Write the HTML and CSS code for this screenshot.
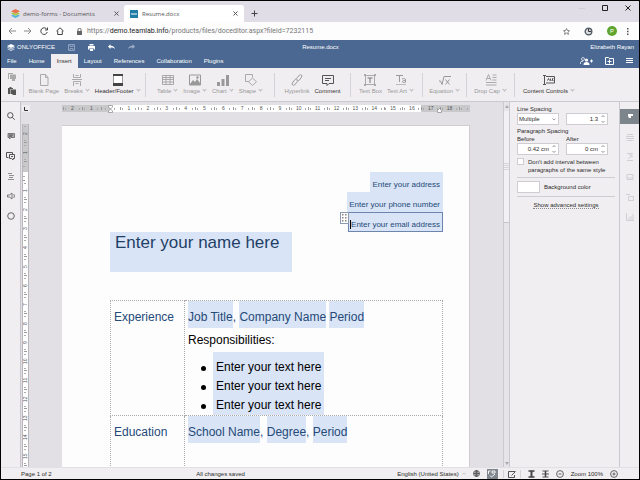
FILE: index.html
```html
<!DOCTYPE html>
<html lang="en">
<head>
<meta charset="utf-8">
<title>Resume.docx</title>
<link rel="stylesheet" href="styles.css">
</head>
<body>
<div class="window">
  <div class="tabstrip">
    <div class="tab">
      <svg class="fav" viewBox="0 0 9 9"><path d="M0 2.2 4.5 0 9 2.2 4.5 4.4z" fill="#e8734e"/><path d="M0 4.5 2 3.6l2.500 1.200L7 3.600l2 .9-4.500 2.200z" fill="#a5c33c"/><path d="M0 6.700l2-.9L4.500 7 7 5.800l2 .9L4.500 9z" fill="#50b6dc"/></svg>
      <span class="tab-name">demo-forms - Documents</span>
      <button class="plain" aria-label="Close tab"><svg width="5" height="5" viewBox="0 0 5 5"><path d="M.5.5l4 4M4.500.5l-4 4" stroke="#555"/></svg></button>
    </div>
    <div class="tab current">
      <svg class="fav small" viewBox="0 0 8 8"><path fill="#1f7ca6" d="M0 0h8v8H0z"/><path d="M1 4h6" stroke="#fff"/></svg>
      <span class="tab-name">Resume.docx</span>
      <button class="plain" aria-label="Close tab"><svg width="5" height="5" viewBox="0 0 5 5"><path d="M.5.5l4 4M4.500.5l-4 4" stroke="#555"/></svg></button>
    </div>
    <button class="plain newtab" aria-label="New tab"><svg width="7" height="7" viewBox="0 0 7 7"><path d="M3.500.5v6M.5 3.500h6" stroke="#444"/></svg></button>
    <div class="wincontrols">
      <button class="plain" aria-label="Minimize"><svg width="6" height="6" viewBox="0 0 6 6"><path d="M0 3.500h6" stroke="#d0cdd6"/></svg></button>
      <button class="plain" aria-label="Maximize"><svg width="6" height="6" viewBox="0 0 6 6"><path d="M.5.5h5v5h-5z" fill="none" stroke="#222"/></svg></button>
      <button class="plain" aria-label="Close"><svg width="6" height="6" viewBox="0 0 6 6"><path d="M.5.5l5 5M5.500.5l-5 5" stroke="#222"/></svg></button>
    </div>
  </div>

  <div class="addressbar">
    <button class="plain" aria-label="Back"><svg width="8" height="8" viewBox="0 0 8 8" fill="none" stroke="#888"><path d="M8 4H1M4 1 1 4l3 3"/></svg></button>
    <button class="plain" aria-label="Forward"><svg width="8" height="8" viewBox="0 0 8 8" fill="none" stroke="#888"><path d="M0 4h7M4 1l3 3-3 3"/></svg></button>
    <button class="plain" aria-label="Reload"><svg width="8" height="8" viewBox="0 0 8 8" fill="none" stroke="#444"><path d="M7 2.500A3.300 3.300 0 1 0 7.300 5M7.500.5v2.500H5"/></svg></button>
    <button class="plain" aria-label="Home page"><svg width="8" height="8" viewBox="0 0 8 8" fill="none" stroke="#444"><path d="M.5 4 4 .8 7.500 4M1.700 3.500v4h4.600v-4"/></svg></button>
    <svg class="lock" width="5" height="7" viewBox="0 0 5 7"><path d="M0 3h5v4H0z" fill="#666"/><path d="M1 3V1.500a1.500 1.200 0 0 1 3 0V3" fill="none" stroke="#666"/></svg>
    <div class="url">https://<b>demo.teamlab.info</b>/products/files/doceditor.aspx?fileid=7232115</div>
    <div class="browser-tools">
      <button class="plain" aria-label="Bookmark"><svg width="7" height="7" viewBox="0 0 7 7"><path d="M3.500.5l.9 2 2.100.2L5 4.200l.4 2.200-1.900-1.200-1.900 1.200L2 4.200.5 2.700l2.100-.2z" fill="none" stroke="#666" stroke-width=".8"/></svg></button>
      <button class="plain" aria-label="Extension"><svg width="9" height="9" viewBox="0 0 9 9"><circle cx="4.500" cy="4.500" r="3.300" fill="#ddd" stroke="#55606c" stroke-width="1.400"/><path d="M4.500 2v2.500H7" fill="none" stroke="#333"/></svg></button>
      <button class="avatar">P</button>
      <button class="plain" aria-label="Browser menu"><svg width="2" height="7" viewBox="0 0 2 7" fill="#555"><path d="M0 0h1.500v1.500H0zM0 2.700h1.500v1.500H0zM0 5.400h1.500v1.500H0z"/></svg></button>
    </div>
  </div>

  <header class="header">
    <div class="titlebar">
      <div class="brand">
        <svg width="8" height="7" viewBox="0 0 8 7" fill="#fff"><path d="M0 2l4-2 4 2-4 2z"/><path d="M0 3.500l1-.4 3 1.400 3-1.400 1 .4-4 1.900zM0 5.100l1-.4 3 1.300 3-1.300 1 .4L4 7z" opacity=".8"/></svg>
        <span>ONLYOFFICE</span>
      </div>
      <div class="quick">
        <button class="plain" aria-label="Save"><svg width="7" height="7" viewBox="0 0 7 7" fill="none" stroke="#8ba0c0"><path d="M.5.5h6v6h-6zM2 .5v2h3v-2M2 6.500v-2h3v2"/></svg></button>
        <button class="plain" aria-label="Print"><svg width="7" height="7" viewBox="0 0 7 7"><path d="M1.500 0h4v1.500h-4zM0 2h7v3.500H5.500V4h-4v1.500H0zM2 4.500h3V7H2z" fill="#fff"/></svg></button>
        <button class="plain" aria-label="Undo"><svg width="7" height="6" viewBox="0 0 7 6"><path d="M0 2.500 2.500.3v1.500C5 1.700 6.700 3 7 5 5.500 3.500 4 3.300 2.500 3.400v1.500z" fill="#fff"/></svg></button>
        <button class="plain" aria-label="Redo"><svg width="7" height="6" viewBox="0 0 7 6"><path d="M7 2.500 4.500.3v1.500C2 1.700.3 3 0 5c1.500-1.500 3-1.700 4.500-1.600v1.500z" fill="#9fb0cb"/></svg></button>
      </div>
      <div class="doctitle">Resume.docx</div>
      <div class="user">Elizabeth Rayan</div>
    </div>
    <div class="menurow">
      <nav class="menu">
        <button>File</button><button>Home</button><button class="on">Insert</button><button>Layout</button><button>References</button><button>Collaboration</button><button>Plugins</button>
      </nav>
      <div class="menu-tools">
        <button class="plain" aria-label="Share"><svg width="13" height="8" viewBox="0 0 13 8"><circle cx="3" cy="2" r="1.500" fill="none" stroke="#fff" stroke-width=".7"/><path d="M.4 7V6c0-1.200 1-1.800 2.600-1.800" fill="none" stroke="#fff" stroke-width=".8"/><circle cx="6.500" cy="3" r="1.600" fill="#fff"/><path d="M3.500 8c0-2.200 1-3 3-3s3 .8 3 3zM10 3.500h3v1h-3zM11 2.500h1v3h-1z" fill="#fff"/></svg></button>
        <button class="plain" aria-label="Open location"><svg width="9" height="8" viewBox="0 0 9 8" fill="none" stroke="#fff"><path d="M.5 7.500v-7h3l.8 1h4.200v6zM2.500 4.500h4M4.500 2.500v4"/></svg></button>
        <button class="plain" aria-label="View settings"><svg width="7" height="6" viewBox="0 0 7 6"><path d="M0 .5h7M0 2.500h7M0 4.500h7" stroke="#fff"/></svg></button>
      </div>
    </div>
  </header>

  <div class="toolbar">
    <div class="clip">
      <button class="plain" aria-label="Copy"><svg width="8" height="8" viewBox="0 0 8 8" fill="#aaa"><path d="M0 0h5v1H1v5H0zM2 1.500h6V6H7v2H4V6H2z"/></svg></button>
      <button class="plain" aria-label="Paste"><svg width="8" height="8" viewBox="0 0 8 8" fill="#555"><path d="M0 1h1.500V0h2v1H5v1H2.500v5H0zM3 2.500h5V8H4.500V7H3z"/></svg></button>
    </div>
    <div class="group">
      <button class="tool"><svg viewBox="0 0 12 12"><path d="M2.500.5h5l2.500 3v8H2.500zM7.500.5v3H10" fill="none" stroke="#aaa"/></svg><span>Blank Page</span></button>
      <button class="tool drop"><svg viewBox="0 0 12 12"><path d="M2.500 0v3.500h7V0M1 5.500h10M2.500 12V7.500h7V12M4.500 1.500h3M4.500 9.500h3" fill="none" stroke="#aaa"/></svg><span>Breaks</span></button>
      <button class="tool drop dark"><svg viewBox="0 0 12 12"><path d="M1.500.5h9v11h-9z" fill="#fff" stroke="#999"/><path d="M1 0h10v2H1zM1 9h10v3H1z" fill="#444"/></svg><span>Header/Footer</span></button>
    </div>
    <div class="group">
      <button class="tool drop"><svg viewBox="0 0 12 12"><path d="M.5 1.500h11v9H.5zM.5 3.500h11M.5 5.500h11M.5 8h11M4 1.500v9M8 1.500v9" fill="none" stroke="#999" stroke-width=".8"/></svg><span>Table</span></button>
      <button class="tool drop"><svg viewBox="0 0 12 12"><path d="M.5 1h11v10H.5z" fill="none" stroke="#999"/><path d="M1 10l3-4 2 2 2-3 3 4v2H1z" fill="#999"/><circle cx="8.500" cy="3.500" r="1.200" fill="#999"/></svg><span>Image</span></button>
      <button class="tool drop"><svg viewBox="0 0 12 12"><path d="M0 8h3v4H0zM4.500 5h3v7h-3zM9 1h3v11H9z" fill="#999"/></svg><span>Chart</span></button>
      <button class="tool drop"><svg viewBox="0 0 12 12" fill="none" stroke="#aaa"><path d="M4 7.500H.5v-7h7v3"/><path d="M7.500 4l4 3.700-4 3.800-4-3.800z"/></svg><span>Shape</span></button>
    </div>
    <div class="group">
      <button class="tool"><svg viewBox="0 0 12 12" fill="none" stroke="#999"><path d="M5.500 4.500l3-3.500c1.500-1 3 .5 2.200 2L8 6.500c-1 .8-2 .5-2.500-.5M6.500 7.500l-3 3.500c-1.500 1-3-.5-2.200-2L4 5.500c1-.8 2-.5 2.500.5"/></svg><span>Hyperlink</span></button>
      <button class="tool dark"><svg viewBox="0 0 12 12" fill="none" stroke="#555"><path d="M.5 1.500h11v8H7l-2 2v-2H.5zM3 4.500h6M3 6.500h4"/></svg><span>Comment</span></button>
    </div>
    <div class="group">
      <button class="tool"><svg viewBox="0 0 12 12"><path d="M1.500 1.500h9v9h-9z" fill="none" stroke="#aaa"/><path d="M3.500 4h5M6 4v5" stroke="#777"/><path d="M0 0h2v2H0zM10 0h2v2h-2zM0 10h2v2H0zM10 10h2v2h-2z" fill="#aaa"/></svg><span>Text Box</span></button>
      <button class="tool drop"><svg viewBox="0 0 12 12"><path d="M1 1.500h7M4.500 1.500V8M7 5c2-.8 3.500-.5 3.500 1v2.500M10.500 6.500C8.500 6.300 7.500 6.800 7.500 7.600c0 1.200 2 1.100 3 0" fill="none" stroke="#999"/><path d="M1 10.500h10" stroke="#bbb"/></svg><span>Text Art</span></button>
    </div>
    <div class="group">
      <button class="tool drop"><svg viewBox="0 0 12 12" fill="none" stroke="#999"><path d="M0 7h1.500L3 10.500l2-8h7"/><path d="M6.500 5.500l4 5M10.500 5.500l-4 5"/></svg><span>Equation</span></button>
    </div>
    <div class="group">
      <button class="tool drop"><svg viewBox="0 0 12 12" fill="none" stroke="#aaa"><path d="M1 6.500l2.500-6 2.500 6M2 4.500h3M7.500 1h4M7.500 3.500h4M7.500 6h4M1 8.500h10.500M1 11h10.500"/></svg><span>Drop Cap</span></button>
    </div>
    <div class="group last">
      <button class="tool drop dark"><svg viewBox="0 0 12 12" fill="none" stroke="#555"><path d="M0 1.500h3M1.500 1.500v9M0 10.500h3M3 2.500h8.500v6.500H3M4.500 6.500l1-2 1 2M7.500 4.500v2h1M10.500 4.500h-1v2h1"/></svg><span>Content Controls</span></button>
    </div>
  </div>

  <main class="work">
    <aside class="leftrail">
      <button class="plain" aria-label="Search"><svg width="8" height="8" viewBox="0 0 8 8" fill="none" stroke="#555"><circle cx="3.300" cy="3.300" r="2.700"/><path d="M5.300 5.300l2.400 2.400"/></svg></button>
      <button class="plain" aria-label="Comments"><svg width="8" height="8" viewBox="0 0 8 8"><path d="M1 1.500h6.500v4H4L2.500 7V5.500H1z" fill="#aaa" stroke="#666" stroke-width=".8"/><path d="M2 3h4M2 4.200h3" stroke="#444" stroke-width=".8"/></svg></button>
      <button class="plain" aria-label="Chat"><svg width="9" height="8" viewBox="0 0 9 8" fill="none" stroke="#555"><path d="M2.500 5.500H.5v-5h6v2M3.500 2.500h5v4H7V8L5.500 6.500h-2zM5 4.500h2"/></svg></button>
      <button class="plain" aria-label="Navigation"><svg width="8" height="8" viewBox="0 0 8 8"><path d="M1 1.500h4M2 3.500h5M2 5.500h4M1 7.500h6" stroke="#777" stroke-width=".8"/></svg></button>
      <button class="plain" aria-label="Feedback"><svg width="8" height="8" viewBox="0 0 8 8" fill="none" stroke="#777"><path d="M.5 3h2L5 1v6L2.500 5h-2zM6.500 2c1.200 1 1.200 3 0 4"/></svg></button>
      <button class="plain" aria-label="About"><svg width="8" height="8" viewBox="0 0 8 8"><circle cx="4" cy="4" r="3.300" fill="none" stroke="#666"/></svg></button>
    </aside>

    <section class="canvas">
      <div class="hrow">
        <div class="corner"><svg width="4" height="4" viewBox="0 0 4 4"><path d="M.5 0v3.500H4" fill="none" stroke="#333"/></svg></div>
        <div class="hruler">
          <i>2</i><i>1</i><i class="mark"></i><i>1</i><i>2</i><i>3</i><i>4</i><i>5</i><i>6</i><i>7</i><i>8</i><i>9</i><i>10</i><i>11</i><i>12</i><i>13</i><i>14</i><i>15</i><i>16</i><i>17</i><i>18</i><i class="tail"></i>
          <svg class="indent start" width="5" height="8" viewBox="0 0 5 8"><path d="M.5.5h4v1.500L2.500 4 .5 2zM2.500 4l2 2v1.500h-4V6z" fill="#fff" stroke="#888" stroke-width=".7"/></svg>
          <svg class="indent end" width="5" height="5" viewBox="0 0 5 5"><path d="M2.500.5l2 2v2h-4v-2z" fill="#fff" stroke="#888" stroke-width=".7"/></svg>
        </div>
      </div>
      <div class="vrow">
        <div class="vruler">
          <i>2</i><i>1</i><i></i><i>1</i><i>2</i><i>3</i><i>4</i><i>5</i><i>6</i><i>7</i><i>8</i><i>9</i><i>10</i><i>11</i><i>12</i><i>13</i><i>14</i><i>15</i>
        </div>
        <article class="page">
          <div class="contacts">
            <p class="field">Enter your address</p>
            <p class="field">Enter your phone number</p>
            <p class="field active">Enter your email address<span class="handle"><svg width="5" height="8" viewBox="0 0 5 8" fill="#888"><path d="M0 0h1.500v1.500H0zM3 0h1.500v1.500H3zM0 3h1.500v1.500H0zM3 3h1.500v1.500H3zM0 6h1.500v1.500H0zM3 6h1.500v1.500H3z"/></svg></span></p>
          </div>
          <h1>Enter your name here</h1>
          <table>
            <tr>
              <th scope="row">Experience</th>
              <td>
                <p class="headline"><span>Job Title</span>, <span>Company Name</span> <span>Period</span></p>
                <p class="resp">Responsibilities:</p>
                <ul><li>Enter your text here</li><li>Enter your text here</li><li>Enter your text here</li></ul>
              </td>
            </tr>
            <tr class="rest">
              <th scope="row">Education</th>
              <td><p class="headline"><span>School Name</span>, <span>Degree</span>, <span>Period</span></p></td>
            </tr>
          </table>
        </article>
      </div>
    </section>

    <div class="scroll">
      <button class="plain" aria-label="Scroll up"><svg width="4" height="3" viewBox="0 0 4 3"><path d="M0 3l2-3 2 3z" fill="#aaa"/></svg></button>
      <div class="track"><div class="thumb"></div></div>
      <button class="plain" aria-label="Scroll down"><svg width="4" height="3" viewBox="0 0 4 3"><path d="M0 0l2 3 2-3z" fill="#aaa"/></svg></button>
    </div>

    <aside class="panel">
      <div class="pair">
        <label class="cap" for="ls">Line Spacing</label><span></span>
        <div class="box"><select id="ls"><option>Multiple</option></select><svg class="chev" width="4" height="3" viewBox="0 0 4 3"><path d="M.5.5 2 2 3.500.5" fill="none" stroke="#888" stroke-width=".8"/></svg></div>
        <div class="box"><input type="text" value="1.3" aria-label="Line spacing value"><svg class="spin" width="4" height="8" viewBox="0 0 4 8"><path d="M.5 2 2 .5 3.500 2M.5 6 2 7.500 3.500 6" fill="none" stroke="#777" stroke-width=".8"/></svg></div>
      </div>
      <div class="pair second">
        <span class="cap wide">Paragraph Spacing</span>
        <label for="before">Before</label><label for="after">After</label>
        <div class="box"><input id="before" type="text" value="0.42 cm"><svg class="spin" width="4" height="8" viewBox="0 0 4 8"><path d="M.5 2 2 .5 3.500 2M.5 6 2 7.500 3.500 6" fill="none" stroke="#777" stroke-width=".8"/></svg></div>
        <div class="box"><input id="after" type="text" value="0 cm"><svg class="spin" width="4" height="8" viewBox="0 0 4 8"><path d="M.5 2 2 .5 3.500 2M.5 6 2 7.500 3.500 6" fill="none" stroke="#777" stroke-width=".8"/></svg></div>
      </div>
      <label class="check"><input type="checkbox"><span>Don't add interval between<br>paragraphs of the same style</span></label>
      <div class="bgcolor"><button class="swatch" id="bg" aria-label="Background color"></button><label for="bg">Background color</label></div>
      <div class="adv"><a href="#">Show advanced settings</a></div>
    </aside>

    <aside class="rightrail">
      <button class="sel" aria-label="Paragraph settings"><svg width="8" height="8" viewBox="0 0 8 8"><path d="M2 1h5v2H5v2H3.500C2 4.500 2 3 2 1z" fill="#fff"/></svg></button>
      <button aria-label="Table settings"><svg width="8" height="8" viewBox="0 0 8 8"><path d="M1 1.500h6M0 3.500h8M0 5.500h8M1 7.500h6" stroke="#d0cfd4"/></svg></button>
      <button aria-label="Image settings"><svg width="8" height="8" viewBox="0 0 8 8"><path d="M1 .5h6M1 7.500h6M2 6l4-4M3 2h3v3" fill="none" stroke="#d0cfd4"/></svg></button>
      <button aria-label="Header settings"><svg width="8" height="8" viewBox="0 0 8 8"><path d="M1 1.500h6v5H1zM1 5h6" fill="none" stroke="#d0cfd4"/></svg></button>
      <button aria-label="Shape settings"><svg width="8" height="8" viewBox="0 0 8 8" fill="none" stroke="#d0cfd4"><path d="M0 1.500h4M2.500 3.500h5v4h-5z"/></svg></button>
      <button aria-label="Chart settings"><svg width="8" height="8" viewBox="0 0 8 8"><path d="M.5 0v7.500H8M3 7V4M5 7V3M7 7V1" fill="none" stroke="#d0cfd4"/></svg></button>
    </aside>
  </main>

  <footer class="status">
    <span class="pages">Page 1 of 2</span>
    <span class="saved">All changes saved</span>
    <div class="status-tools">
      <button class="lang">English (United States)<svg width="4" height="3" viewBox="0 0 4 3"><path d="M.5 2.500 2 1l1.500 1.500" fill="none" stroke="#bbb" stroke-width=".8"/></svg></button>
      <button class="plain" aria-label="Document language"><svg width="7" height="7" viewBox="0 0 7 7" fill="none" stroke="#555" stroke-width=".9"><circle cx="3.500" cy="3.500" r="3"/><path d="M.5 3.500h6M3.500.5v6"/><ellipse cx="3.500" cy="3.500" rx="1.500" ry="3"/></svg></button>
      <button class="spell" aria-label="Spell checking"><svg width="8" height="8" viewBox="0 0 8 8" fill="none" stroke="#fff"><path d="M.5 1v3M.5 1h2M4 1h3v2H4zM2 5.500l1.500 1.500L7 4" stroke-width=".9"/></svg></button>
      <button class="plain edged" aria-label="Track changes"><svg width="8" height="8" viewBox="0 0 8 8" fill="none" stroke="#555"><path d="M7 1.500H.5v6h6V5M3.500 5.500l4-4"/></svg></button>
      <button class="plain" aria-label="Fit page"><svg width="7" height="8" viewBox="0 0 7 8"><path d="M.5 1h6M.5 7h6" stroke="#444" stroke-width="1.500"/><path d="M3.500 1v6" stroke="#444" stroke-width="2"/></svg></button>
      <button class="plain" aria-label="Fit width"><svg width="7" height="8" viewBox="0 0 7 8"><path d="M.5 1h6M.5 7h6M0 4h7" stroke="#555" stroke-width="1.200"/><path d="M3.500 1v6" stroke="#444" stroke-width="1.500"/></svg></button>
      <button class="plain" aria-label="Zoom out"><svg width="8" height="8" viewBox="0 0 8 8" fill="none" stroke="#555" stroke-width=".9"><circle cx="4" cy="4" r="3.400"/><path d="M2.500 4h3"/></svg></button>
      <span class="zoomval">Zoom 100%</span>
      <button class="plain" aria-label="Zoom in"><svg width="8" height="8" viewBox="0 0 8 8" fill="none" stroke="#555" stroke-width=".9"><circle cx="4" cy="4" r="3.400"/><path d="M2.500 4h3M4 2.500v3"/></svg></button>
    </div>
  </footer>
</div>
</body>
</html>
```
FILE: styles.css
```css
* { box-sizing: border-box; }
body, p, h1, ul { margin: 0; padding: 0; }
body {
  font: 6px/8px "Liberation Sans", Arial, sans-serif;
  color: #2c2c2c;
  background: #f0eef1;
}
button, input, select {
  font: inherit;
  color: inherit;
  border: 0;
  padding: 0;
  margin: 0;
  background: none;
}
svg { display: block; flex: none; }
.plain { display: flex; align-items: center; justify-content: center; }

.window {
  height: 100vh;
  display: flex;
  flex-direction: column;
  border: 1px solid #000;
  overflow: hidden;
}

/* browser tabs */
.tabstrip {
  flex: none;
  display: flex;
  height: 21px;
  padding-top: 4px;
  background: #e0dde7;
}
.tab {
  width: 123px;
  display: flex;
  align-items: center;
  gap: 3px;
  padding: 0 5px 0 10px;
  color: #555;
}
.tab.current {
  width: 120px;
  padding: 0 6px;
  gap: 4px;
  background: #fff;
  border-radius: 3px 3px 0 0;
}
.tab-name { flex: 1; font: 6px/8px "Open Sans", sans-serif; white-space: nowrap; }
.fav { width: 9px; height: 9px; }
.fav.small { width: 8px; height: 8px; }
.newtab { width: 20px; height: 17px; }
.wincontrols { display: flex; gap: 17px; margin-left: auto; padding-right: 8px; height: 6px; }

/* address bar */
.addressbar {
  flex: none;
  display: flex;
  align-items: center;
  gap: 8px;
  height: 18px;
  padding: 0 7px;
  background: #fdfdfe;
}
.lock { margin-left: 5px; }
.url { flex: 1; margin-left: -3px; font: 7px/10px Roboto, sans-serif; color: #777; white-space: nowrap; }
.url b { font-weight: 400; color: #222; }
.browser-tools { display: flex; align-items: center; gap: 14px; padding-right: 3px; }
.avatar { width: 10px; height: 10px; border-radius: 50%; background: #5fa52e; color: #fff; margin: 0 -4px 0 0; }

/* editor header */
.header { flex: none; background: #4a6891; color: #fff; }
.titlebar {
  display: grid;
  grid-template-columns: 67px 72px 1fr 138px;
  align-items: center;
  height: 14px;
}
.brand { display: flex; align-items: center; gap: 2px; padding-left: 6px; }
.quick { display: flex; align-items: center; gap: 13px; }
.doctitle { text-align: center; }
.user { text-align: right; padding-right: 5px; }
.menurow { display: flex; justify-content: space-between; height: 14px; }
.menu { display: flex; }
.menu button { padding: 0 6px; color: #fff; }
.menu .on { background: #f0eef1; color: #333; }
.menu-tools { display: flex; align-items: center; gap: 12px; padding-right: 6px; }

/* toolbar */
.toolbar {
  flex: none;
  display: grid;
  grid-template-columns: 23px 122px 129px 76px 72px 44px 48px 68px;
  align-items: center;
  height: 34px;
  border-bottom: 1px solid #cbc9cd;
}
.clip { display: flex; flex-direction: column; gap: 6px; align-items: center; }
.group, .clip { height: 24px; border-right: 1px solid #d5d3d7; }
.group { display: flex; justify-content: center; gap: 5px; }
.group.last { border: 0; }
.tool { display: flex; flex-direction: column; align-items: center; justify-content: flex-start; gap: 1px; padding-top: 1px; color: #999; white-space: nowrap; }
.tool > svg { width: 12px; height: 12px; }
.tool.dark { color: #333; }
.tool.drop span::after {
  content: "";
  display: inline-block;
  width: 2px;
  height: 2px;
  margin: 0 1px 2px 3px;
  border: solid #bbb;
  border-width: 0 1px 1px 0;
  transform: rotate(45deg);
}

/* work area */
.work { flex: 1; min-height: 0; display: flex; }
.leftrail {
  width: 20px;
  display: flex;
  flex-direction: column;
  align-items: center;
  gap: 12px;
  padding-top: 10px;
  border-right: 1px solid #c6c4c8;
}
.canvas { flex: 1; min-width: 0; display: flex; flex-direction: column; background: #e2e0e4; }
.hrow { flex: none; height: 22px; display: flex; padding: 3px 33px 0 1px; }
.corner { width: 8px; height: 7px; margin-right: 32px; background: #eeecef; display: flex; align-items: center; justify-content: center; }
.hruler {
  position: relative;
  flex: 1;
  display: flex;
  height: 7px;
  padding-left: 1px;
  background: linear-gradient(90deg, #c9c8cb 0 12%, #fff 12% 88%, #c9c8cb 88%);
}
.hruler i, .vruler i {
  display: flex;
  align-items: center;
  justify-content: space-around;
  font: 5px/7px "Liberation Sans", Arial, sans-serif;
  color: #555;
}
.hruler i {
  flex: 19 0 0;
  min-width: 0;
  background: linear-gradient(#999, #999) left center / 1px 3px no-repeat;
}
.hruler i::before, .hruler i::after { content: ""; width: 1px; height: 2px; background: #aaa; }
.hruler .tail { flex: 11 0 0; }
.indent { position: absolute; }
.indent.start { left: 46px; top: 0; }
.indent.end { right: 28px; top: 3px; }
.vrow { flex: 1; min-height: 0; display: flex; padding-right: 33px; }
.vruler {
  width: 7px;
  margin: 0 33px 0 1px;
  overflow: hidden;
  border: solid #b8b6ba;
  border-width: 0 1px;
  background: linear-gradient(#c9c8cb 0 48px, #fff 48px);
}
.vruler i { height: 19px; writing-mode: vertical-rl; line-height: 5px; transform: rotate(180deg); background: linear-gradient(#999, #999) center top / 3px 1px no-repeat; }
.vruler i::before, .vruler i::after { content: ""; width: 2px; height: 1px; background: #aaa; }

/* document */
.page {
  flex: 1;
  overflow: hidden;
  margin-top: 1px;
  padding: 46px 26px 0 48px;
  background: #fdfdfe;
  border: solid #cfcdd1;
  border-width: 1px 1px 0 0;
  color: #000;
}
.contacts { display: flex; flex-direction: column; align-items: flex-end; }
.field {
  position: relative;
  height: 20px;
  padding: 5px 3px 0 2px;
  font-size: 8px;
  line-height: 15px;
  background: #d9e4f6;
  color: #254a78;
}
.field.active { border: 1px solid #6d86ad; padding: 4px 2px 0; }
.field.active::before { content: ""; position: absolute; left: 1px; top: 7px; height: 9px; border-left: 1px solid #000; }
.handle { position: absolute; left: -9px; top: -1px; padding: 1px; border: 1px solid #8d9bb3; background: #fff; }
h1 {
  width: max-content;
  padding: 1px 13px 19px 5px;
  font: 17px/20px "Liberation Sans", Arial, sans-serif;
  color: #1f3f66;
  background: #d9e4f6;
}
table {
  width: 100%;
  margin-top: 28px;
  border-collapse: collapse;
  font-size: 12px;
  line-height: 18px;
}
th, td { padding: 0; vertical-align: top; border: 1px dotted #aaa; }
th { width: 74px; padding: 7px 0 0 3px; font-weight: 400; text-align: left; color: #254a78; }
td { padding-left: 3px; }
.headline { color: #254a78; height: 27px; }
.headline span { display: inline-block; padding: 7px 0 2px; background: #d9e4f6; }
.resp { line-height: 24px; }
ul { list-style: none; width: max-content; margin-left: 25px; padding: 6px 3px 0; line-height: 19px; background: #d9e4f6; }
li { position: relative; }
li::before { content: ""; position: absolute; left: -15px; top: 8px; width: 5px; height: 5px; border-radius: 50%; background: #000; }
.rest { height: 80px; }

/* scrollbar */
.scroll { width: 7px; display: flex; flex-direction: column; background: #e6e4e8; border: solid #cbc9cd; border-width: 0 1px; }
.scroll > button { height: 7px; margin-top: 1px; }
.track { flex: 1; }
.thumb { height: 112px; margin-top: 1px; background: #f2f0f3; border-bottom: 1px solid #c6c4c8; }
.thumb::before { content: ""; display: block; height: 8px; transform: translateY(52px); background: repeating-linear-gradient(#d6d4d8 0 1px, #f2f0f3 1px 2px); }

/* settings panel */
.panel { width: 109px; padding: 3px 4px 0 7px; }
.pair { display: grid; grid-template-columns: 42px 42px; column-gap: 7px; }
.second { margin-top: 2px; }
.wide { grid-column: span 2; }
.box { position: relative; height: 12px; background: #fff; border: 1px solid #cfcdd1; }
.box select, .box input { display: block; width: 100%; height: 10px; outline: 0; }
.box select { appearance: none; padding-left: 1px; }
.box input { text-align: right; padding-right: 9px; }
.chev { position: absolute; right: 2px; top: 4px; pointer-events: none; }
.spin { position: absolute; right: 2px; top: 1px; }
.check { display: flex; gap: 4px; margin-top: 3px; }
.check input { appearance: none; flex: none; width: 7px; height: 7px; background: #fff; border: 1px solid #cfcdd1; }
.check span { white-space: nowrap; }
.bgcolor { display: flex; align-items: center; gap: 4px; margin-top: 3px; padding: 3px 0; border: solid #cfcdd1; border-width: 1px 0; }
.swatch { width: 23px; height: 12px; background: #fff; border: 1px solid #cfcdd1; }
.adv { text-align: center; margin-top: 4px; }
.adv a { color: #2c2c2c; text-decoration: none; border-bottom: 1px dotted #888; }
.rightrail { width: 20px; padding-top: 7px; border-left: 1px solid #cbc9cd; }
.rightrail button { display: flex; align-items: center; justify-content: center; width: 100%; height: 15px; margin-bottom: 5px; }
.rightrail .sel { background: #7d858c; }

/* status bar */
.status { flex: none; display: flex; align-items: center; height: 12px; padding: 0 21px 0 20px; border-top: 1px solid #e2e0e4; }
.pages { flex: 175; }
.saved { flex: 201; }
.status-tools { display: flex; align-items: center; gap: 7px; white-space: nowrap; }
.lang { display: flex; align-items: center; gap: 3px; }
.spell { width: 11px; height: 10px; background: #80868d; display: flex; align-items: center; justify-content: center; }
.edged { padding: 0 4px; margin-left: -2px; border: solid #d5d3d7; border-width: 0 1px; }
```
